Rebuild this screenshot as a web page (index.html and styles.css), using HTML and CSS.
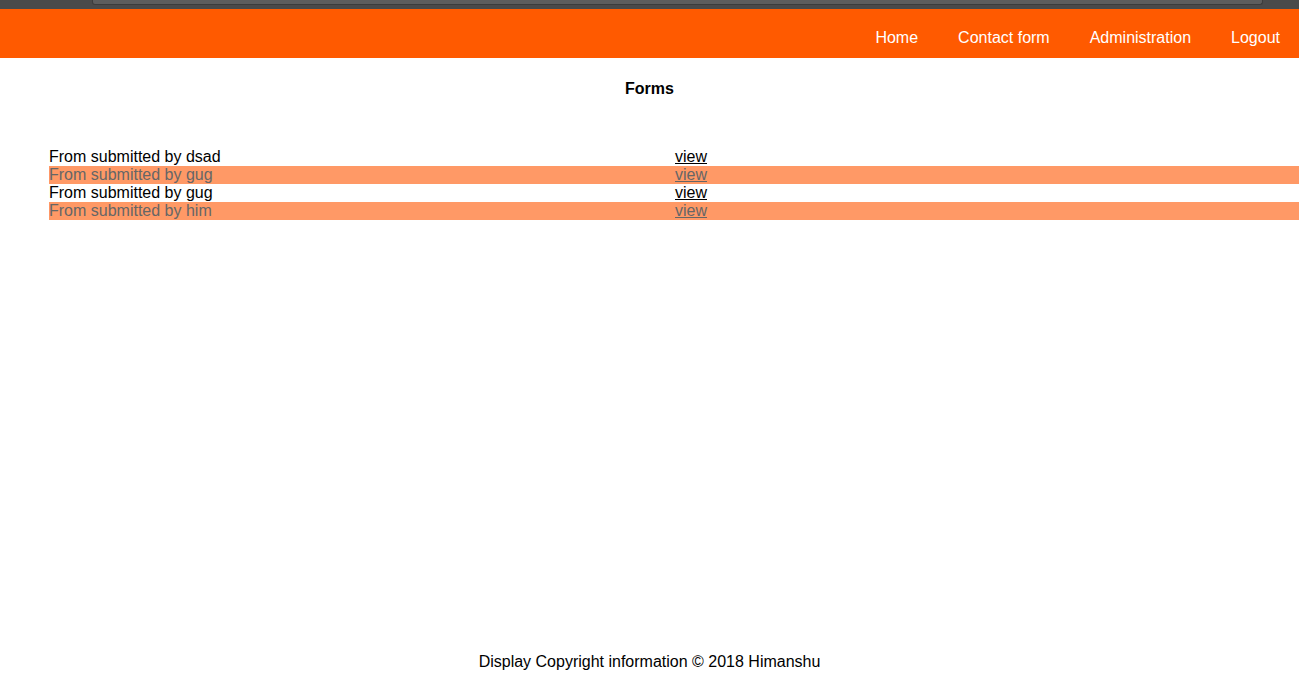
FILE: index.html
```html
<!DOCTYPE html>
<html lang="en">
<head>
<meta charset="utf-8">
<title>Forms</title>
<link rel="stylesheet" href="styles.css">
</head>
<body>
<div class="chrome"><div class="chrome-field"></div></div>
<header class="topbar">
  <nav class="nav">
    <a class="nav-link" href="#">Home</a>
    <a class="nav-link" href="#">Contact form</a>
    <a class="nav-link" href="#">Administration</a>
    <a class="nav-link" href="#">Logout</a>
  </nav>
</header>
<main class="content">
  <h1 class="title">Forms</h1>
  <div class="list">
    <div class="row"><span>From submitted by dsad</span><a class="view" href="#">view</a></div>
    <div class="row alt"><span>From submitted by gug</span><a class="view" href="#">view</a></div>
    <div class="row"><span>From submitted by gug</span><a class="view" href="#">view</a></div>
    <div class="row alt"><span>From submitted by him</span><a class="view" href="#">view</a></div>
  </div>
</main>
<footer class="footer">Display Copyright information © 2018 Himanshu</footer>
</body>
</html>
```
FILE: styles.css
```css
html, body {
  margin: 0;
  padding: 0;
  height: 100%;
}
body {
  font-family: "Liberation Sans", Arial, sans-serif;
  font-size: 16px;
  line-height: 18px;
  color: #000;
  background: #fff;
  display: flex;
  flex-direction: column;
  overflow: hidden;
}
.chrome {
  height: 9px;
  background: #4a4a4a;
  padding: 0 36px 0 92px;
  box-sizing: border-box;
}
.chrome-field {
  height: 4px;
  background: #5d5d5d;
  border: 1px solid #3c3c3c;
  border-top: none;
  border-radius: 0 0 3px 3px;
}
.topbar {
  background: #ff5a00;
  height: 49px;
  box-sizing: border-box;
  padding-top: 20px;
}
.nav {
  display: flex;
  justify-content: flex-end;
  padding-right: 0;
  margin-right: -1px;
}
.nav-link {
  color: #fff;
  text-decoration: none;
  padding: 0 20px;
}
.content {
  flex: 1;
}
.title {
  margin: 22px 0 0;
  font-size: 16px;
  line-height: 18px;
  font-weight: bold;
  text-align: center;
}
.list {
  margin-top: 50px;
  padding-left: 49px;
}
.row {
  display: grid;
  grid-template-columns: 626px 1fr;
  height: 18px;
}
.row.alt {
  background: #ff9966;
  color: #666;
}
.view {
  color: inherit;
  text-decoration: underline;
}
.footer {
  text-align: center;
  padding-bottom: 15px;
}
```
